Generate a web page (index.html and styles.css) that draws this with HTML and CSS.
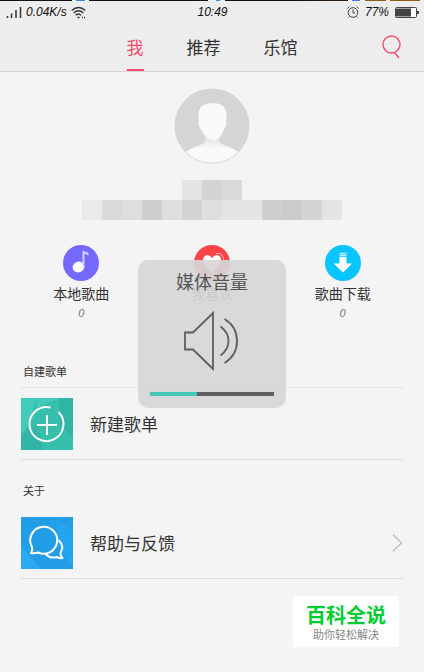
FILE: index.html
```html
<!DOCTYPE html>
<html lang="zh-CN">
<head>
  <meta charset="UTF-8">
  <meta name="viewport" content="width=device-width, initial-scale=1">
  <title>我的音乐</title>
  <link rel="stylesheet" href="styles.css">
</head>
<body>
  <header class="top">
    <div class="edge"></div>
    <div class="status">
      <div class="status-left">
        <svg width="16" height="12" viewBox="0 0 16 12" stroke="#333" fill="none"><path d="M1.5 10v2M5.500 7.500v4.500M10 4v8M14.500 1v11" stroke-width="1.500"/></svg>
        <em>0.04K/s</em>
        <svg width="15" height="13" viewBox="0 0 15 13" stroke="#333" fill="none" stroke-width="1.300"><path d="M.7 4.500Q7.500-1.500 14.300 4.500M2.700 7Q7.500 2.500 12.300 7M4.800 9.300Q7.500 6.700 10 9.300M6.500 11.500h2M11 11.500h1M13 11.500h1"/></svg>
      </div>
      <em>10:49</em>
      <div class="status-right">
        <svg width="12" height="12" viewBox="0 0 12 12" stroke="#444" fill="none"><circle cx="6" cy="6.500" r="4.800"/><path d="M6 3.500v3.500h2M.5 2.500 2.500.5M11.500 2.500 9.500.5M2.500 10.500l-1 1M9.500 10.500l1 1"/></svg>
        <em>77%</em>
        <svg width="24" height="11" viewBox="0 0 24 11"><rect x=".5" y=".5" width="21" height="10" rx="1" fill="#fff" stroke="#444"/><rect x="1" y="1.500" width="15" height="8" fill="#444"/><path d="M22 4h2v3h-2z" fill="#444"/></svg>
      </div>
    </div>
    <div class="nav">
      <nav class="tabs">
        <a href="#me" class="tab active">我</a>
        <a href="#recommend" class="tab">推荐</a>
        <a href="#hall" class="tab">乐馆</a>
      </nav>
      <button class="search" type="button" aria-label="搜索">
        <svg width="19" height="24" viewBox="0 0 19 24" fill="none" stroke="#fb4a6b" stroke-width="1.400"><circle cx="9.500" cy="9.500" r="8.500"/><path d="M12.500 17.500l4.500 5.500"/></svg>
      </button>
    </div>
  </header>

  <main>
    <section class="profile">
      <svg class="avatar" width="76" height="76" viewBox="0 0 76 76">
        <defs>
          <clipPath id="face"><circle cx="38" cy="38" r="36.800"/></clipPath>
          <linearGradient id="neck" x1="0" y1="0" x2="0" y2="1"><stop offset="0" stop-color="#dedede"/><stop offset=".5" stop-color="#fafafa"/></linearGradient>
        </defs>
        <circle cx="38" cy="38" r="37.500" fill="#d5d5d5"/>
        <path clip-path="url(#face)" fill="url(#neck)" d="M31 47v4q0 4-5 6-9 3-16 8v11h56V65q-8-5-16-8-5-2-5-6v-4z"/>
        <path fill="#fafafa" d="M25 33q-2-11 3-15 4-3 10.500-3T49 18q5 4 3 15 1 1 0 4-1 4-2 4-1 5-5 9-6 5-12 0-4-4-6-9-1 0-2-4-1-3 0-4z"/>
      </svg>
      <div class="mosaic" aria-hidden="true">
        <div class="mosaic-row"><i class="g2"></i><i class="g5"></i><i class="g4"></i></div>
        <div class="mosaic-row"><i class="g1"></i><i class="g4"></i><i class="g3"></i><i class="g6"></i><i class="g3"></i><i class="g5"></i><i class="g3"></i><i class="g2"></i><i class="g2"></i><i class="g6"></i><i class="g7"></i><i class="g5"></i><i class="g2"></i></div>
      </div>
    </section>

    <section class="shortcuts">
      <a href="#local" class="shortcut">
        <svg width="36" height="36" viewBox="0 0 36 36"><circle cx="18" cy="18" r="18" fill="#7468fe"/><ellipse cx="15.500" cy="22" rx="6" ry="5.300" fill="#fff" transform="rotate(-20 15.500 22)"/><path d="M19.500 22V5.500l6 2.500v2.500l-4-2V22z" fill="#d6d2ff"/></svg>
        <span class="name">本地歌曲</span>
        <em class="count">0</em>
      </a>
      <a href="#like" class="shortcut">
        <svg width="36" height="36" viewBox="0 0 36 36"><circle cx="18" cy="18" r="18" fill="#ff4346"/><path d="M18 27q-9-7-9-12 0-4 4-5 3 0 5 3 2-3 5-3 4 1 4 5 0 5-9 12z" fill="#fff"/><path d="M22 8.500q7-1 7.500 6" fill="none" stroke="#ffc0c0"/></svg>
        <span class="name">我喜欢</span>
      </a>
      <a href="#download" class="shortcut">
        <svg width="36" height="36" viewBox="0 0 36 36"><circle cx="18" cy="18" r="18" fill="#06c5ff"/><path d="M14.500 12h7v6.500H27L18 27.500 8.500 18.500h6z" fill="#fff"/><path d="M14.500 8.500h7M14.500 10.500h7" stroke="#b5edff" stroke-width="1.300"/></svg>
        <span class="name">歌曲下载</span>
        <em class="count">0</em>
      </a>
    </section>

    <section class="group">
      <h2>自建歌单</h2>
      <a href="#new" class="row">
        <svg width="52" height="52" viewBox="0 0 52 52"><path fill="#37bfae" d="M0 0h52v52H0z"/><path fill="#42cbb9" d="M0 0h16L5 31l-5 5zM17 0h22L15 10z"/><path fill="#30b4a3" d="M38 0h14v40L39 28z"/><path fill="#31b5a4" d="M0 36l17-9 5 25H0z"/><path d="M29.500 9.500A17 17 0 1 0 37.500 14M26 17v20M16 27h20" fill="none" stroke="#fff" stroke-width="2"/></svg>
        <span>新建歌单</span>
      </a>
    </section>

    <section class="group about">
      <h2>关于</h2>
      <a href="#help" class="row">
        <svg width="52" height="52" viewBox="0 0 52 52"><path fill="#219ee6" d="M0 0h52v52H0z"/><path fill="#2baaf4" d="M0 29l20 23H0z"/><path fill="#25a4ee" d="M35 0l17 15v37L37 28z"/><g fill="none" stroke="#fff" stroke-width="2" stroke-linejoin="round"><path d="M10 36q2-3 1-6A13.500 13.500 0 1 1 17 35.500q-3 1-7 .5z"/><path d="M37 23q5 4 4 9-1 3-1.500 4 0 3 2 5-3 .5-6-1-6 2-11-3"/></g></svg>
        <span>帮助与反馈</span>
        <svg class="arrow" width="11" height="18" viewBox="0 0 11 18" fill="none" stroke="#bbb" stroke-width="1.300"><path d="M1 .8 9.500 9 1 17.200"/></svg>
      </a>
    </section>
  </main>

  <div class="volume">
    <label for="vol">媒体音量</label>
    <svg width="58" height="60" viewBox="0 0 58 60" fill="none" stroke="#5e5e5e" stroke-width="1.800"><path d="M2 21.500h8L30 2v56L10 38.500H2zM37.500 15.500q8 6 8 14.500t-8 14.500M41.500 8Q54 15.500 54 30T41.500 52"/></svg>
    <input type="range" id="vol" min="0" max="100" value="38">
  </div>

  <div class="watermark">
    <strong>百科全说</strong>
    <span>助你轻松解决</span>
  </div>
</body>
</html>
```

FILE: styles.css
```css
* {
  box-sizing: border-box;
}
body {
  margin: 0;
  min-height: 100vh;
  position: relative;
  background: #f4f4f4;
  color: #333;
  font-family: "Liberation Sans", "Noto Sans CJK SC", sans-serif;
}
a {
  color: inherit;
  text-decoration: none;
}
svg {
  display: block;
}
.top {
  background: #ededed;
  border-bottom: 1px solid #d4d4d4;
}
.edge {
  height: 1px;
  background: linear-gradient(to right,
    #14110f 17%, #eee 17% 18%, #3b82f0 18% 20%, #eee 20% 21%,
    #14110f 21% 49%, #eee 49% 51%, #3b82f0 51% 52%, #eee 52% 53%,
    #14110f 53% 70%, #38210c 82%, #eee 82% 83%, #3b82f0 83% 85%, #eee 85% 86%,
    #8f5c10 86% 91%, #eee 91% 92%, #8f5c10 92% 99%, #eee 99%);
}
.status {
  display: grid;
  grid-template-columns: 1fr auto 1fr;
  align-items: center;
  height: 22px;
  padding: 0 5px 0 6px;
  font-size: 12px;
  color: #111;
}
.status-left, .status-right {
  display: flex;
  align-items: center;
  gap: 4px;
}
.status-right {
  justify-content: flex-end;
  gap: 6px;
}
.nav {
  display: grid;
  grid-template-columns: 1fr auto 1fr;
  height: 48px;
  padding: 0 23px;
}
.tabs {
  grid-column: 2;
  display: flex;
  gap: 43px;
}
.tab {
  display: flex;
  align-items: center;
  border-bottom: 2px solid transparent;
  font-size: 17px;
}
.tab.active {
  color: #fb4a6b;
  border-color: #fb4a6b;
}
.search {
  justify-self: end;
  align-self: center;
  padding: 0;
  border: none;
  background: none;
  cursor: pointer;
}
.profile {
  display: flex;
  flex-direction: column;
  align-items: center;
  gap: 16px;
  padding-top: 16px;
}
.mosaic-row {
  display: flex;
  justify-content: center;
}
.mosaic i {
  width: 20px;
  height: 20px;
}
.g1 { background: #eaeaea; }
.g2 { background: #e4e4e4; }
.g3 { background: #dedede; }
.g4 { background: #dadada; }
.g5 { background: #d4d4d4; }
.g6 { background: #cfcfcf; }
.g7 { background: #cbcbcb; }
.shortcuts {
  display: grid;
  grid-template-columns: repeat(3, 1fr);
  padding: 25px 16px 0;
}
.shortcut {
  display: flex;
  flex-direction: column;
  align-items: center;
}
.name {
  margin-top: 3px;
  font-size: 14px;
  line-height: 20px;
}
.count {
  font-size: 11px;
  line-height: 19px;
  color: #777;
}
.group {
  padding: 0 21px;
}
.shortcuts + .group {
  margin-top: 41px;
}
.about {
  margin-top: 23px;
}
.group h2 {
  margin: 0;
  padding: 0 0 7px 2px;
  font-size: 11px;
  font-weight: normal;
  line-height: 16px;
}
.row {
  display: flex;
  align-items: center;
  height: 73px;
  border-top: 1px solid #e4e4e4;
  border-bottom: 1px solid #dedede;
  font-size: 17px;
}
.about .row {
  border-top-color: #efefef;
}
.row span {
  margin-left: 17px;
}
.arrow {
  margin-left: auto;
}
.volume {
  position: absolute;
  top: 260px;
  left: 50%;
  transform: translateX(-50%);
  display: flex;
  flex-direction: column;
  align-items: center;
  width: 148px;
  padding: 10px 12px 12px;
  border-radius: 10px;
  background: rgba(214, 214, 214, 0.93);
}
.volume label {
  font-size: 18px;
  line-height: 26px;
  color: #555;
}
.volume svg {
  margin: 15px 0 21px;
}
.volume input {
  appearance: none;
  width: 100%;
  height: 4px;
  margin: 0;
  background: linear-gradient(to right, #42c9b8 38%, #606060 38%);
}
.volume input::-webkit-slider-thumb {
  appearance: none;
  width: 1px;
  height: 4px;
}
.watermark {
  position: absolute;
  right: 25px;
  bottom: 25px;
  padding: 8px 13px 4px;
  background: #fff;
  text-align: center;
}
.watermark strong, .watermark span {
  display: block;
}
.watermark strong {
  font-size: 20px;
  line-height: 24px;
  color: #0c3;
}
.watermark span {
  font-size: 11px;
  line-height: 15px;
  color: #888;
}
```
